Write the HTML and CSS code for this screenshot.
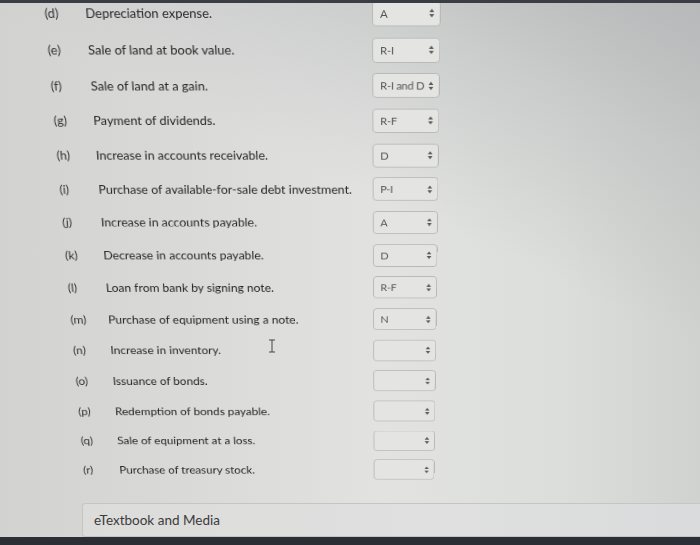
FILE: index.html
```html
<!DOCTYPE html>
<html>
<head>
<meta charset="utf-8">
<link rel="stylesheet" href="styles.css">
</head>
<body>
<div class="topbar"></div>
<div class="stage">
  <div class="list">
    <div class="row"><span class="lbl">(d)</span><span class="txt">Depreciation expense.</span><div class="sel"><span class="val">A</span><svg class="arr" viewBox="0 0 6 10"><path d="M3 0.5 L5.5 4 L0.5 4 Z M3 9.5 L5.5 6 L0.5 6 Z"/></svg></div></div>
    <div class="row"><span class="lbl">(e)</span><span class="txt">Sale of land at book value.</span><div class="sel"><span class="val">R-I</span><svg class="arr" viewBox="0 0 6 10"><path d="M3 0.5 L5.5 4 L0.5 4 Z M3 9.5 L5.5 6 L0.5 6 Z"/></svg></div></div>
    <div class="row"><span class="lbl">(f)</span><span class="txt">Sale of land at a gain.</span><div class="sel"><span class="val">R-I and D</span><svg class="arr" viewBox="0 0 6 10"><path d="M3 0.5 L5.5 4 L0.5 4 Z M3 9.5 L5.5 6 L0.5 6 Z"/></svg></div></div>
    <div class="row"><span class="lbl">(g)</span><span class="txt">Payment of dividends.</span><div class="sel"><span class="val">R-F</span><svg class="arr" viewBox="0 0 6 10"><path d="M3 0.5 L5.5 4 L0.5 4 Z M3 9.5 L5.5 6 L0.5 6 Z"/></svg></div></div>
    <div class="row"><span class="lbl">(h)</span><span class="txt">Increase in accounts receivable.</span><div class="sel"><span class="val">D</span><svg class="arr" viewBox="0 0 6 10"><path d="M3 0.5 L5.5 4 L0.5 4 Z M3 9.5 L5.5 6 L0.5 6 Z"/></svg></div></div>
    <div class="row"><span class="lbl">(i)</span><span class="txt">Purchase of available-for-sale debt investment.</span><div class="sel"><span class="val">P-I</span><svg class="arr" viewBox="0 0 6 10"><path d="M3 0.5 L5.5 4 L0.5 4 Z M3 9.5 L5.5 6 L0.5 6 Z"/></svg></div></div>
    <div class="row"><span class="lbl">(j)</span><span class="txt">Increase in accounts payable.</span><div class="sel"><span class="val">A</span><svg class="arr" viewBox="0 0 6 10"><path d="M3 0.5 L5.5 4 L0.5 4 Z M3 9.5 L5.5 6 L0.5 6 Z"/></svg></div></div>
    <div class="row"><span class="lbl">(k)</span><span class="txt">Decrease in accounts payable.</span><div class="sel"><span class="val">D</span><svg class="arr" viewBox="0 0 6 10"><path d="M3 0.5 L5.5 4 L0.5 4 Z M3 9.5 L5.5 6 L0.5 6 Z"/></svg></div></div>
    <div class="row"><span class="lbl">(l)</span><span class="txt">Loan from bank by signing note.</span><div class="sel"><span class="val">R-F</span><svg class="arr" viewBox="0 0 6 10"><path d="M3 0.5 L5.5 4 L0.5 4 Z M3 9.5 L5.5 6 L0.5 6 Z"/></svg></div></div>
    <div class="row"><span class="lbl">(m)</span><span class="txt">Purchase of equipment using a note.</span><div class="sel"><span class="val">N</span><svg class="arr" viewBox="0 0 6 10"><path d="M3 0.5 L5.5 4 L0.5 4 Z M3 9.5 L5.5 6 L0.5 6 Z"/></svg></div></div>
    <div class="row"><span class="lbl">(n)</span><span class="txt">Increase in inventory.</span><div class="sel"><span class="val"></span><svg class="arr" viewBox="0 0 6 10"><path d="M3 0.5 L5.5 4 L0.5 4 Z M3 9.5 L5.5 6 L0.5 6 Z"/></svg></div></div>
    <div class="row"><span class="lbl">(o)</span><span class="txt">Issuance of bonds.</span><div class="sel"><span class="val"></span><svg class="arr" viewBox="0 0 6 10"><path d="M3 0.5 L5.5 4 L0.5 4 Z M3 9.5 L5.5 6 L0.5 6 Z"/></svg></div></div>
    <div class="row"><span class="lbl">(p)</span><span class="txt">Redemption of bonds payable.</span><div class="sel"><span class="val"></span><svg class="arr" viewBox="0 0 6 10"><path d="M3 0.5 L5.5 4 L0.5 4 Z M3 9.5 L5.5 6 L0.5 6 Z"/></svg></div></div>
    <div class="row"><span class="lbl">(q)</span><span class="txt">Sale of equipment at a loss.</span><div class="sel"><span class="val"></span><svg class="arr" viewBox="0 0 6 10"><path d="M3 0.5 L5.5 4 L0.5 4 Z M3 9.5 L5.5 6 L0.5 6 Z"/></svg></div></div>
    <div class="row"><span class="lbl">(r)</span><span class="txt">Purchase of treasury stock.</span><div class="sel"><span class="val"></span><svg class="arr" viewBox="0 0 6 10"><path d="M3 0.5 L5.5 4 L0.5 4 Z M3 9.5 L5.5 6 L0.5 6 Z"/></svg></div></div>
  </div>
</div>
<div class="footer"><span class="ftxt">eTextbook and Media</span></div>
<div class="bottombar"></div>
<svg class="cursor" viewBox="0 0 8 14"><path d="M1 1 H7 M4 1 V13 M1 13 H7" fill="none" stroke="#444" stroke-width="1"/></svg>
</body>
</html>
```

FILE: styles.css
```css
html, body {
  margin: 0;
  padding: 0;
}
body {
  width: 700px;
  height: 545px;
  overflow: hidden;
  position: relative;
  font-family: Lato, "Open Sans", sans-serif;
  background:
    linear-gradient(205deg, #b6b8b9 0%, rgba(190,192,193,0.6) 18%, rgba(220,222,220,0) 40%),
    linear-gradient(90deg, #d2d3d1 0%, #d9dad8 25%, #e2e3e1 55%, #dcdedb 80%, #d0d2cf 100%);
}
.topbar {
  height: 3px;
  background: #3b3d45;
  position: relative;
  z-index: 3;
}
.stage {
  height: 508px;
  margin-top: -8.5px;
}
.list {
  transform-origin: 386px 0;
  transform: perspective(1200px) rotateX(-16.5deg);
  display: flex;
  flex-direction: column;
}
.row {
  height: 38.7px;
  display: flex;
  align-items: center;
  padding-left: 43px;
}
.lbl {
  width: 41px;
  font-size: 13px;
  color: #333;
}
.txt {
  width: 288px;
  font-size: 13px;
  color: #262626;
  white-space: nowrap;
}
.sel {
  width: 69px;
  height: 27px;
  box-sizing: border-box;
  border: 1px solid #b9bab8;
  border-radius: 4px;
  background: #e4e5e3;
  display: flex;
  align-items: center;
  justify-content: space-between;
  padding: 0 5px 0 7px;
}
.val {
  font-size: 11.5px;
  color: #555;
  white-space: nowrap;
  letter-spacing: -0.3px;
}
.arr {
  width: 6px;
  height: 10px;
  fill: #5a5a5a;
  flex: none;
}
.footer {
  margin-left: 82px;
  height: 34px;
  box-sizing: border-box;
  border: 1px solid #c4c6c4;
  border-right: none;
  border-radius: 3px 0 0 3px;
  background: linear-gradient(90deg, #dcdddb 0%, #dfe0df 60%, #d9dbdc 100%);
  display: flex;
  align-items: center;
  padding-left: 11px;
}
.ftxt {
  font-size: 13.5px;
  color: #3a3a3a;
}
.bottombar {
  height: 8px;
  background: #2b2e35;
}
.cursor {
  position: absolute;
  left: 268px;
  top: 339px;
  width: 8px;
  height: 14px;
}
```
